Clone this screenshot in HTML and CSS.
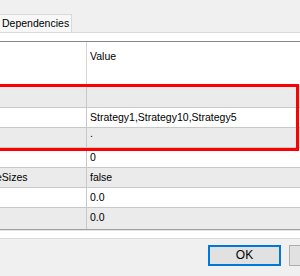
FILE: index.html
```html
<!DOCTYPE html>
<html>
<head>
<meta charset="utf-8">
<link rel="stylesheet" href="styles.css">
</head>
<body>
<div class="window">
  <div class="tabs">
    <div class="tab">Dependencies</div>
  </div>
  <div class="panel">
    <div class="grid">
      <div class="header">
        <div class="cell name"></div>
        <div class="cell value">Value</div>
      </div>
      <div class="row alt first">
        <div class="cell name"></div>
        <div class="cell value"></div>
      </div>
      <div class="row">
        <div class="cell name"></div>
        <div class="cell value">Strategy1,Strategy10,Strategy5</div>
      </div>
      <div class="row alt">
        <div class="cell name"></div>
        <div class="cell value"><span class="dot">.</span></div>
      </div>
      <div class="row">
        <div class="cell name"></div>
        <div class="cell value">0</div>
      </div>
      <div class="row alt">
        <div class="cell name"><span class="clip">eSizes</span></div>
        <div class="cell value">false</div>
      </div>
      <div class="row">
        <div class="cell name"></div>
        <div class="cell value">0.0</div>
      </div>
      <div class="row alt last">
        <div class="cell name"></div>
        <div class="cell value">0.0</div>
      </div>
      <div class="highlight"></div>
    </div>
  </div>
  <div class="footer">
    <div class="btn default">OK</div>
    <div class="btn">Cancel</div>
  </div>
</div>
</body>
</html>
```
FILE: styles.css
```css
html, body {
  margin: 0;
  padding: 0;
}
body {
  width: 300px;
  height: 276px;
  overflow: hidden;
  background: #f0f0f0;
  font-family: "Liberation Sans", Arial, sans-serif;
  font-size: 10.5px;
  color: #000;
}
.window {
  width: 300px;
  height: 276px;
  display: flex;
  flex-direction: column;
}
.tabs {
  height: 32px;
  display: flex;
  align-items: flex-end;
}
.tab {
  margin-left: -1px;
  width: 73px;
  height: 18px;
  box-sizing: border-box;
  border: 1px solid #d9d9d9;
  border-bottom: none;
  background: #f7f7f7;
  line-height: 17px;
  padding-left: 2px;
  white-space: nowrap;
}
.panel {
  background: #ffffff;
  border-top: 1px solid #d9d9d9;
  border-bottom: 1px solid #d9d9d9;
  padding-top: 8px;
  height: 197px;
  box-sizing: content-box;
}
.grid {
  position: relative;
  border-top: 1px solid #828790;
  border-bottom: 1px solid #a0a0a0;
  box-shadow: 0 1px 0 #e3e3e3;
}
.header {
  display: flex;
  height: 44px;
  border-bottom: 1px solid #c8c8c8;
  background: #fff;
}
.header .value {
  padding-top: 8px;
}
.row {
  display: flex;
  height: 19px;
  line-height: 19px;
  border-bottom: 1px solid #c8c8c8;
  background: #ffffff;
}
.row.alt {
  background: #ebebeb;
}
.row.first {
  height: 20px;
}
.row.last {
  height: 21px;
  border-bottom: none;
}
.cell {
  box-sizing: border-box;
  overflow: hidden;
  white-space: nowrap;
}
.cell.name {
  width: 87px;
  border-right: 1px solid #c8c8c8;
}
.cell.value {
  flex: 1;
  padding-left: 3px;
}
.header .cell.name {
  border-right-color: #d6d6d6;
}
.clip {
  display: inline-block;
  margin-left: -4px;
}
.dot {
  display: inline-block;
  line-height: 10px;
  vertical-align: 6px;
}
.highlight {
  position: absolute;
  left: -10px;
  top: 42px;
  width: 309px;
  height: 67px;
  box-sizing: border-box;
  border: 3px solid #ff0000;
  pointer-events: none;
}
.footer {
  flex: 1;
  display: flex;
  gap: 8px;
  padding-left: 208px;
  padding-top: 6px;
  overflow: hidden;
}
.btn {
  flex: none;
  width: 73px;
  height: 21px;
  box-sizing: border-box;
  border: 1px solid #adadad;
  background: #e1e1e1;
  text-align: center;
  line-height: 19px;
  font-size: 12px;
}
.btn.default {
  border: 2px solid #0078d7;
  line-height: 17px;
}
```
